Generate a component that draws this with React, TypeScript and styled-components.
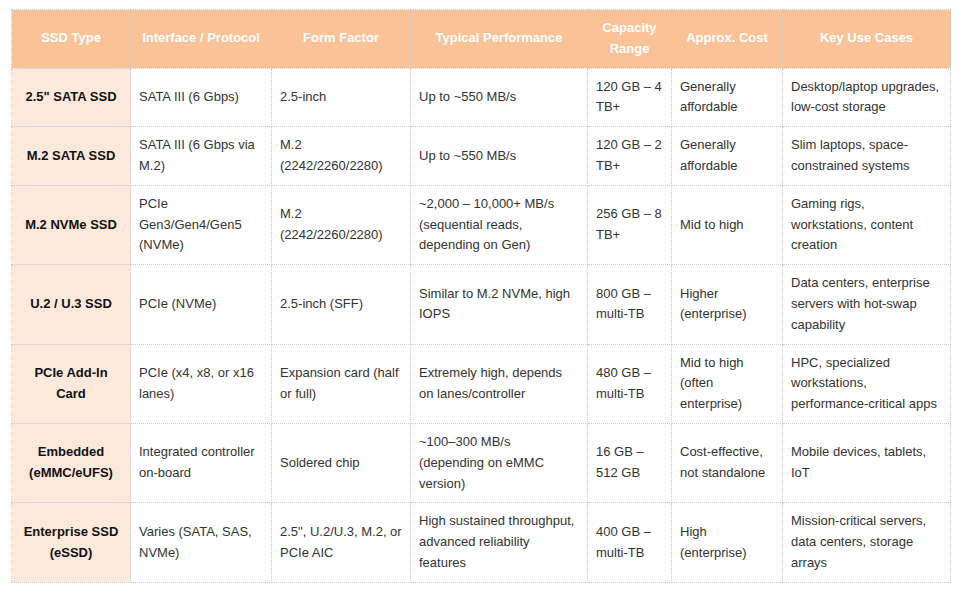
import React from 'react';
import styled, { createGlobalStyle } from 'styled-components';

const GlobalStyle = createGlobalStyle`
  html, body {
    margin: 0;
    padding: 0;
    background: #ffffff;
  }
`;

const Page = styled.div`
  padding: 9px 14px 9px 11px;
  font-family: 'Liberation Sans', Arial, sans-serif;
`;

const Table = styled.table`
  width: 939px;
  table-layout: fixed;
  border-collapse: collapse;
  border: 1px dotted #cccccc;
  font-size: 13px;
  line-height: 20.8px;
`;

const HeadCell = styled.th`
  background: #f9c397;
  color: #ffffff;
  font-weight: 700;
  text-align: center;
  vertical-align: middle;
  padding: 8px;
  border: 1px dotted #cccccc;
`;

const Cell = styled.td<{ $lead?: boolean }>`
  background: ${(p) => (p.$lead ? '#fde9db' : '#ffffff')};
  color: ${(p) => (p.$lead ? '#111111' : '#333333')};
  font-weight: ${(p) => (p.$lead ? 700 : 400)};
  text-align: ${(p) => (p.$lead ? 'center' : 'left')};
  vertical-align: middle;
  padding: 8px;
  border: 1px dotted #cccccc;
`;

const columns = [
  { title: 'SSD Type', width: 119 },
  { title: 'Interface / Protocol', width: 141 },
  { title: 'Form Factor', width: 139 },
  { title: 'Typical Performance', width: 177 },
  { title: 'Capacity Range', width: 84 },
  { title: 'Approx. Cost', width: 111 },
  { title: 'Key Use Cases', width: 168 },
];

const rows: string[][] = [
  [
    '2.5" SATA SSD',
    'SATA III (6 Gbps)',
    '2.5-inch',
    'Up to ~550 MB/s',
    '120 GB – 4 TB+',
    'Generally affordable',
    'Desktop/laptop upgrades, low-cost storage',
  ],
  [
    'M.2 SATA SSD',
    'SATA III (6 Gbps via M.2)',
    'M.2 (2242/2260/2280)',
    'Up to ~550 MB/s',
    '120 GB – 2 TB+',
    'Generally affordable',
    'Slim laptops, space-constrained systems',
  ],
  [
    'M.2 NVMe SSD',
    'PCIe Gen3/Gen4/Gen5 (NVMe)',
    'M.2 (2242/2260/2280)',
    '~2,000 – 10,000+ MB/s (sequential reads, depending on Gen)',
    '256 GB – 8 TB+',
    'Mid to high',
    'Gaming rigs, workstations, content creation',
  ],
  [
    'U.2 / U.3 SSD',
    'PCIe (NVMe)',
    '2.5-inch (SFF)',
    'Similar to M.2 NVMe, high IOPS',
    '800 GB – multi-TB',
    'Higher (enterprise)',
    'Data centers, enterprise servers with hot-swap capability',
  ],
  [
    'PCIe Add-In Card',
    'PCIe (x4, x8, or x16 lanes)',
    'Expansion card (half or full)',
    'Extremely high, depends on lanes/controller',
    '480 GB – multi-TB',
    'Mid to high (often enterprise)',
    'HPC, specialized workstations, performance-critical apps',
  ],
  [
    'Embedded (eMMC/eUFS)',
    'Integrated controller on-board',
    'Soldered chip',
    '~100–300 MB/s (depending on eMMC version)',
    '16 GB – 512 GB',
    'Cost-effective, not standalone',
    'Mobile devices, tablets, IoT',
  ],
  [
    'Enterprise SSD (eSSD)',
    'Varies (SATA, SAS, NVMe)',
    '2.5", U.2/U.3, M.2, or PCIe AIC',
    'High sustained throughput, advanced reliability features',
    '400 GB – multi-TB',
    'High (enterprise)',
    'Mission-critical servers, data centers, storage arrays',
  ],
];

export default function App() {
  return (
    <>
      <GlobalStyle />
      <Page>
        <Table>
          <colgroup>
            {columns.map((c) => (
              <col key={c.title} style={{ width: c.width }} />
            ))}
          </colgroup>
          <thead>
            <tr>
              {columns.map((c) => (
                <HeadCell key={c.title}>{c.title}</HeadCell>
              ))}
            </tr>
          </thead>
          <tbody>
            {rows.map((row) => (
              <tr key={row[0]}>
                {row.map((text, i) => (
                  <Cell key={i} $lead={i === 0}>
                    {text}
                  </Cell>
                ))}
              </tr>
            ))}
          </tbody>
        </Table>
      </Page>
    </>
  );
}
